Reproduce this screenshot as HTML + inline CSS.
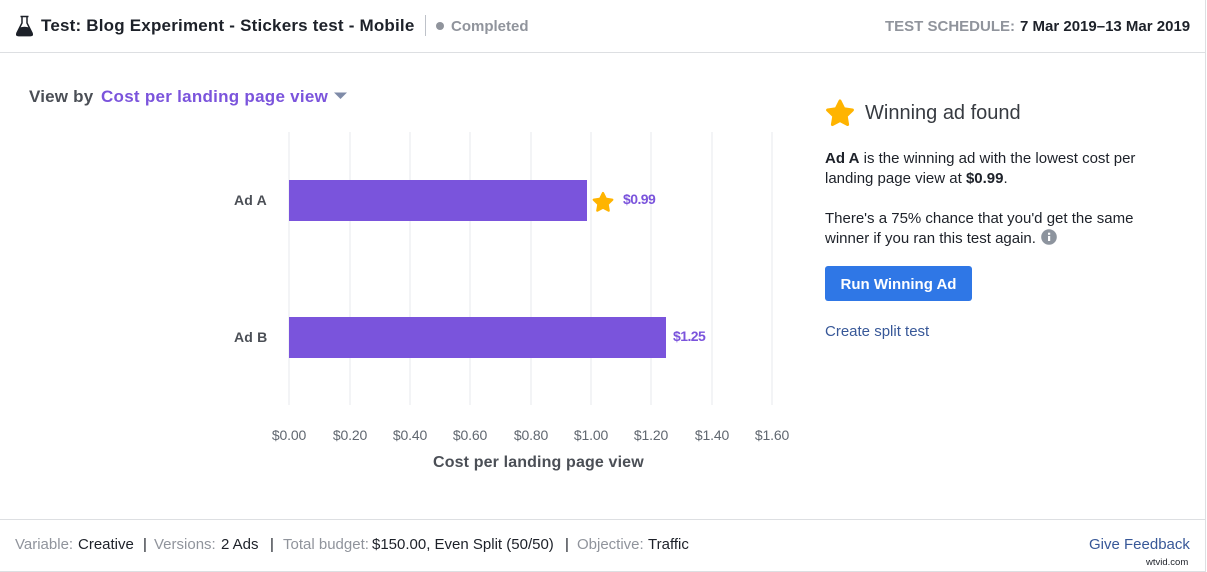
<!DOCTYPE html>
<html><head><meta charset="utf-8">
<style>
html,body{margin:0;padding:0;background:#fff;}
body{width:1207px;height:572px;position:relative;overflow:hidden;font-family:"Liberation Sans",sans-serif;color:#1d2129;}
.t{position:absolute;white-space:nowrap;line-height:20px;}
.b{font-weight:bold;}
.r{position:absolute;}
.g{position:absolute;top:132px;height:273px;width:2px;background:#f3f4f6;}
.x{position:absolute;top:425px;width:60px;text-align:center;font-size:14px;color:#606770;line-height:20px;letter-spacing:-.15px;}
.m{color:#90949c;}
.f{position:absolute;top:535px;white-space:nowrap;line-height:20px;font-size:15px;}
</style></head>
<body>
<div class="r" style="left:1205px;top:0;width:1px;height:572px;background:#dddfe2"></div>
<div class="r" style="left:0;top:52px;width:1205px;height:1px;background:#dddfe2"></div>
<div class="r" style="left:0;top:519px;width:1205px;height:1px;background:#dddfe2"></div>
<div class="r" style="left:0;top:571px;width:1206px;height:1px;background:#dddfe2"></div>

<svg class="r" style="left:15px;top:15px" width="20" height="22" viewBox="0 0 20 22"><path d="M5.500 1.500h8M7 1.500v6.500L2 18q-.8 2.500 2 2.500h11q2.800 0 2-2.500L12 8V1.500" fill="none" stroke="#1d2129" stroke-width="1.500"/><path d="M4.800 12.500q4.500-1.500 9.400 0l3.800 6.500q.3 2.200-2 2.200H3q-2.300 0-2-2.200z" fill="#1d2129"/></svg>
<div class="t b" style="left:41px;top:16px;font-size:17px;letter-spacing:.2px">Test: Blog Experiment - Stickers test - Mobile</div>
<div class="r" style="left:425px;top:15px;width:1px;height:21px;background:#bec2c9"></div>
<div class="r" style="left:436px;top:22px;width:8px;height:8px;border-radius:50%;background:#90949c"></div>
<div class="t b" style="left:451px;top:17px;font-size:15px;color:#90949c;">Completed</div>
<div class="t b" style="left:885px;top:17px;font-size:15px;color:#90949c;">TEST SCHEDULE:</div>
<div class="t b" style="left:1020px;top:17px;font-size:15px;">7 Mar 2019–13 Mar 2019</div>

<div class="t b" style="left:29px;top:87px;font-size:17px;color:#4b4f56;letter-spacing:.2px">View by</div>
<div class="t b" style="left:101px;top:87px;font-size:17px;color:#7b54dc;letter-spacing:.27px">Cost per landing page view</div>
<svg class="r" style="left:334px;top:92px" width="13" height="8"><path d="M0 0.500h13L6.500 7z" fill="#7f8ba8"/></svg>

<div class="g" style="left:288px"></div><div class="g" style="left:349px"></div><div class="g" style="left:409px"></div><div class="g" style="left:469px"></div><div class="g" style="left:530px"></div><div class="g" style="left:590px"></div><div class="g" style="left:650px"></div><div class="g" style="left:711px"></div><div class="g" style="left:771px"></div>

<div class="r" style="left:289px;top:180px;width:298px;height:41px;background:#7a54dc"></div>
<div class="r" style="left:289px;top:317px;width:377px;height:41px;background:#7a54dc"></div>
<div class="t b" style="left:234px;top:190px;font-size:14px;color:#4b4f56;letter-spacing:.2px">Ad A</div>
<div class="t b" style="left:234px;top:327px;font-size:14px;color:#4b4f56;letter-spacing:.2px">Ad B</div>
<svg class="r" style="left:591px;top:190px" width="24" height="24" viewBox="0 0 32 32"><path d="M16 4L19.800 11.700 28.400 13 22.200 19 23.600 27.500 16 23.500 8.400 27.500 9.800 19 3.600 13 12.200 11.700z" fill="#ffb400" stroke="#ffb400" stroke-width="3" stroke-linejoin="round"/></svg>
<div class="t b" style="left:623px;top:189px;font-size:14px;color:#7b54dc;letter-spacing:-.55px">$0.99</div>
<div class="t b" style="left:673px;top:326px;font-size:14px;color:#7b54dc;letter-spacing:-.55px">$1.25</div>

<div class="x" style="left:259px">$0.00</div><div class="x" style="left:320px">$0.20</div><div class="x" style="left:380px">$0.40</div><div class="x" style="left:440px">$0.60</div><div class="x" style="left:501px">$0.80</div><div class="x" style="left:561px">$1.00</div><div class="x" style="left:621px">$1.20</div><div class="x" style="left:682px">$1.40</div><div class="x" style="left:742px">$1.60</div>
<div class="t b" style="left:433px;top:453px;font-size:16px;color:#4b4f56;letter-spacing:.14px">Cost per landing page view</div>

<svg class="r" style="left:824px;top:97px" width="32" height="32" viewBox="0 0 32 32"><path d="M16 4L19.800 11.700 28.400 13 22.200 19 23.600 27.500 16 23.500 8.400 27.500 9.800 19 3.600 13 12.200 11.700z" fill="#ffb400" stroke="#ffb400" stroke-width="3" stroke-linejoin="round"/></svg>
<div class="t" style="left:865px;top:102px;font-size:20px;line-height:22px;color:#373b41">Winning ad found</div>
<div class="t" style="left:825px;top:149px;font-size:15px;"><b>Ad A</b> is the winning ad with the lowest cost per</div>
<div class="t" style="left:825px;top:169px;font-size:15px;">landing page view at <b>$0.99</b>.</div>
<div class="t" style="left:825px;top:209px;font-size:15px;">There's a 75% chance that you'd get the same</div>
<div class="t" style="left:825px;top:229px;font-size:15px;">winner if you ran this test again.</div>
<svg class="r" style="left:1041px;top:229px" width="16" height="16" viewBox="0 0 16 16"><circle cx="8" cy="8" r="7.800" fill="#8d949e"/><rect x="7" y="7" width="2.200" height="5" fill="#fff"/><rect x="7" y="3.700" width="2.200" height="2.100" fill="#fff"/></svg>
<div class="r b" style="left:825px;top:266px;width:147px;height:35px;background:#2f77e6;border-radius:3px;color:#fff;font-size:15px;line-height:37px;text-align:center">Run Winning Ad</div>
<div class="t" style="left:825px;top:322px;font-size:15px;color:#385898;">Create split test</div>

<div class="f m" style="left:15px">Variable:</div><div class="f" style="left:78px">Creative</div><div class="f" style="left:143px">|</div>
<div class="f m" style="left:154px">Versions:</div><div class="f" style="left:221px">2 Ads</div><div class="f" style="left:270px">|</div>
<div class="f m" style="left:283px">Total budget:</div><div class="f" style="left:372px">$150.00, Even Split (50/50)</div><div class="f" style="left:565px">|</div>
<div class="f m" style="left:577px">Objective:</div><div class="f" style="left:648px">Traffic</div>
<div class="f" style="left:1089px;color:#385898;">Give Feedback</div>
<div class="t" style="left:1146px;top:557px;font-size:9.500px;line-height:11px;color:#1d2129;background:#fff;">wtvid.com</div>
</body></html>
